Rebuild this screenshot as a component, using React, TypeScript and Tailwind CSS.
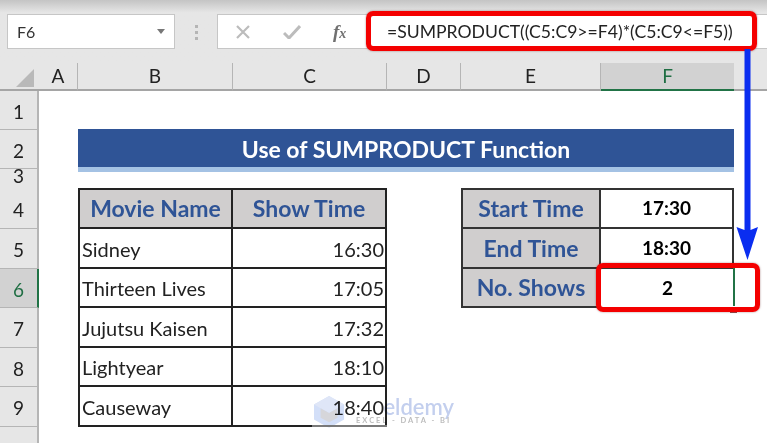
const columns = ["", "A", "B", "C", "D", "E", "F", ""];

const movies = [
  { name: "Sidney", time: "16:30" },
  { name: "Thirteen Lives", time: "17:05" },
  { name: "Jujutsu Kaisen", time: "17:32" },
  { name: "Lightyear", time: "18:10" },
  { name: "Causeway", time: "18:40" },
];

const rowStarts = ["row-start-6", "row-start-7", "row-start-8", "row-start-9", "row-start-10"];
const headerRows = ["row-start-2", "row-start-3", "row-start-4", "row-start-5", "row-start-6", "row-start-7", "row-start-8", "row-start-9", "row-start-10", "row-start-11"];
const rowLabels = ["1", "2", "3", "4", "5", "6", "7", "8", "9", ""];

function Toolbar() {
  return (
    <div className="h-[63px] bg-gradient-to-b from-[#c4c4c4] via-[#e6e6e6] via-20% to-[#e6e6e6] pt-[14px] pl-[7px] flex items-start">
      <div className="w-[168px] h-[35px] bg-white border border-[#c6c6c6] flex items-center justify-between pl-[9px] pr-[9px] text-[16px] text-[#333]">
        <span>F6</span>
        <span className="w-0 h-0 border-l-[4px] border-r-[4px] border-t-[5px] border-l-transparent border-r-transparent border-t-[#777]" />
      </div>
      <div className="w-[42px] flex flex-col items-center gap-[3px] pt-[11px]">
        <span className="w-[3px] h-[3px] bg-[#b5b5b5]" />
        <span className="w-[3px] h-[3px] bg-[#b5b5b5]" />
        <span className="w-[3px] h-[3px] bg-[#b5b5b5]" />
      </div>
      <div className="flex-1 h-[35px] bg-white border border-[#c6c6c6] border-r-0 flex items-center">
        <div className="w-[150px] flex items-center text-[#bcbcbc]">
          <svg className="ml-[17px]" width="16" height="14" viewBox="0 0 16 14">
            <path d="M2 1l12 12M14 1L2 13" stroke="currentColor" strokeWidth="2.2" fill="none" />
          </svg>
          <svg className="ml-[32px]" width="18" height="14" viewBox="0 0 18 14">
            <path d="M1 8l5 5L17 1" stroke="currentColor" strokeWidth="3" fill="none" />
          </svg>
          <span className="ml-[32px] font-['Liberation_Serif'] italic font-bold text-[19px] leading-none text-[#707070]">
            f<span className="text-[14px]">x</span>
          </span>
        </div>
        <span className="text-[17.6px] text-[#222] whitespace-nowrap pt-[1px] ml-[19px]">
          =SUMPRODUCT((C5:C9&gt;=F4)*(C5:C9&lt;=F5))
        </span>
      </div>
    </div>
  );
}

function Watermark() {
  return (
    <div className="absolute left-[312px] top-[396px] w-[144px] h-[34px] flex items-start mix-blend-multiply pointer-events-none">
      <svg width="36" height="32" viewBox="0 0 36 34" className="shrink-0">
        <path d="M17 0L33 9v16L17 34 1 25V9z" fill="#d3dff8" />
        <path d="M17 0L33 9 17 18 1 9z" fill="#dfe6f7" />
        <path d="M17 18l9-5v10l-9 5-9-5v-10z" fill="#d6d6da" />
      </svg>
      <div className="ml-[8px] flex flex-col w-[100px]">
        <span className="text-[22px] leading-[21px] font-semibold text-[#c3cfee] text-right pr-[2px]">eldemy</span>
        <span className="text-[7.5px] leading-[8px] tracking-[2px] text-[#bdbdbd] font-bold whitespace-nowrap">EXCEL - DATA - BI</span>
      </div>
    </div>
  );
}

export default function App() {
  return (
    <div className="relative w-[767px] h-[443px] overflow-hidden bg-white font-['Lato','Carlito',sans-serif] text-[#222]">
      <Toolbar />

      <div className="grid grid-cols-[39px_39px_155px_154px_74px_140px_133px_33px] grid-rows-[28px_39px_39px_19px_41px_40px_39px_40px_39px_40px_16px]">
        {columns.map((c, i) => (
          <div
            key={i}
            className={
              "row-start-1 flex items-center justify-center text-[19px] pt-[1px] border-b-2 border-[#a5a5a5] " +
              (c === "F"
                ? "bg-[#d2d2d2] text-[#1f6e43] border-b-[#217346]"
                : "bg-[#e6e6e6] " + (i > 0 && i < 7 ? "border-r border-r-[#b5b5b5]" : ""))
            }
          >
            {c === "" && i === 0 ? (
              <span className="mt-[2px] ml-[10px] w-0 h-0 border-l-[18px] border-b-[18px] border-l-transparent border-b-[#b9b9b9]" />
            ) : (
              c
            )}
          </div>
        ))}

        {rowLabels.map((r, i) => (
          <div
            key={i}
            className={
              "col-start-1 flex justify-center overflow-hidden text-[19px] leading-[24px] border-r-2 " +
              headerRows[i] +
              (r === "3" ? " items-end -mb-px" : " items-center pt-[3px]") +
              (r === "6"
                ? " bg-[#d2d2d2] text-[#1f6e43] border-r-[#217346] border-b border-b-[#b5b5b5]"
                : " bg-[#e6e6e6] border-r-[#b5b5b5]" + (r ? " border-b border-b-[#b5b5b5]" : ""))
            }
          >
            {r}
          </div>
        ))}

        <div className="col-start-3 col-end-8 row-start-3 -mt-px -mb-[3px] flex items-center justify-center bg-[#2f5496] border-b-[5px] border-b-[#a4c2e4] text-white font-bold text-[23px] pt-[3px]">
          Use of SUMPRODUCT Function
        </div>

        <div className="col-start-3 row-start-5 flex items-center justify-center bg-[#d0cece] border-2 border-[#222] text-[#2f5496] font-bold text-[23px]">
          Movie Name
        </div>
        <div className="col-start-4 row-start-5 flex items-center justify-center bg-[#d0cece] border-2 border-l-0 border-[#222] text-[#2f5496] font-bold text-[23px]">
          Show Time
        </div>
        {movies.map((m, i) => (
          <div key={m.name} className="contents">
            <div className={"col-start-3 flex items-center pl-[2px] pt-[1px] text-[20px] border-2 border-t-0 border-[#222] " + rowStarts[i]}>
              {m.name}
            </div>
            <div className={"col-start-4 flex items-center justify-end pr-[1px] pt-[1px] text-[20px] border-2 border-t-0 border-l-0 border-[#222] " + rowStarts[i]}>
              {m.time}
            </div>
          </div>
        ))}

        <div className="col-start-6 row-start-5 flex items-center justify-center bg-[#d0cece] border-2 border-[#333] text-[#2f5496] font-bold text-[23px]">
          Start Time
        </div>
        <div className="col-start-7 row-start-5 flex items-center justify-center border-2 border-l-0 border-[#333] font-bold text-[19px] text-black">
          17:30
        </div>
        <div className="col-start-6 row-start-6 flex items-center justify-center bg-[#d0cece] border-2 border-t-0 border-[#333] text-[#2f5496] font-bold text-[23px]">
          End Time
        </div>
        <div className="col-start-7 row-start-6 flex items-center justify-center border-2 border-t-0 border-l-0 border-[#333] font-bold text-[19px] text-black">
          18:30
        </div>
        <div className="col-start-6 row-start-7 flex items-center justify-center bg-[#d0cece] border-2 border-t-0 border-[#333] text-[#2f5496] font-bold text-[23px]">
          No. Shows
        </div>
        <div className="col-start-7 row-start-7 flex items-center justify-center font-bold text-[19px] text-black">
          2
        </div>
      </div>

      {/* annotations on top of the sheet */}
      <div className="absolute left-[733px] top-[268px] w-[2px] h-[38px] bg-[#217346]" />
      <div className="absolute left-[730px] top-[309px] w-[7px] h-[4px] bg-[#9c4a4a]" />
      <div className="absolute left-[366px] top-[11px] w-[391px] h-[40px] border-[5px] border-[#f40000] rounded-[7px] shadow-[0_0_2px_rgba(80,0,0,0.5)]" />
      <div className="absolute left-[596px] top-[263px] w-[164px] h-[49px] border-[5px] border-[#f40000] rounded-[7px] shadow-[0_0_2px_rgba(80,0,0,0.5)]" />
      <svg className="absolute left-[733px] top-[49px]" width="28" height="214" viewBox="0 0 28 214">
        <path d="M11.5 0h6v181l7.500-3-10.500 33-11-33 8 3z" fill="#0a2df0" />
      </svg>
      <Watermark />
      <div className="absolute left-[312px] top-[425px] w-[76px] h-[3px] bg-white/40" />
    </div>
  );
}
